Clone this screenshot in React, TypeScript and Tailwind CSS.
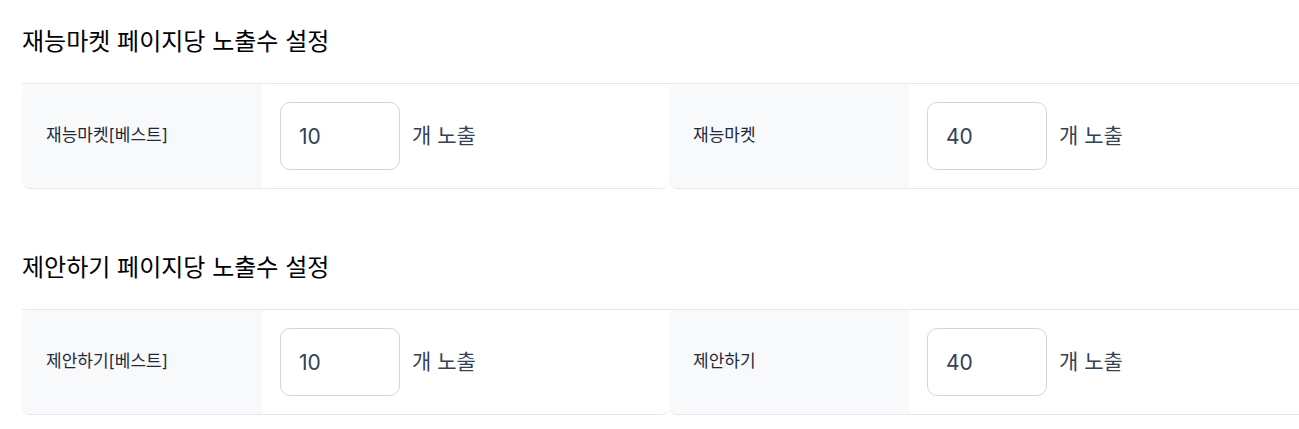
const sections = [
  {
    title: '재능마켓 페이지당 노출수 설정',
    items: [
      { label: '재능마켓[베스트]', value: '10' },
      { label: '재능마켓', value: '40' },
    ],
  },
  {
    title: '제안하기 페이지당 노출수 설정',
    items: [
      { label: '제안하기[베스트]', value: '10' },
      { label: '제안하기', value: '40' },
    ],
  },
];

export default function App() {
  return (
    <div
      className="w-full overflow-hidden bg-white pl-[22px]"
      style={{ fontFamily: 'Inter, "Noto Sans CJK KR", sans-serif' }}
    >
      <div className="w-[1294px]">
        {sections.map((section, i) => (
          <section key={section.title} className={i === 0 ? 'pt-7' : 'pt-[65px]'}>
            <h2 className="h-7 text-[24px] leading-7 font-normal text-black">{section.title}</h2>
            <div className="mt-[27px] grid grid-cols-2 border-t border-gray-200">
              {section.items.map(item => (
                <div
                  key={item.label}
                  className="flex h-[105px] overflow-hidden rounded-lg border-b border-gray-200"
                >
                  <div className="flex w-[240px] items-center bg-[#f8f9fb] pl-6 text-[17px] text-[#1e293b]">
                    {item.label}
                  </div>
                  <div className="flex flex-1 items-center gap-3 bg-white pl-[18px]">
                    <input
                      defaultValue={item.value}
                      className="h-[68px] w-[120px] rounded-[10px] border border-[#d1d5db] px-[18px] text-[21px] text-[#334155] outline-none"
                    />
                    <span className="text-[21px] text-[#334155]">개 노출</span>
                  </div>
                </div>
              ))}
            </div>
          </section>
        ))}
      </div>
    </div>
  );
}
